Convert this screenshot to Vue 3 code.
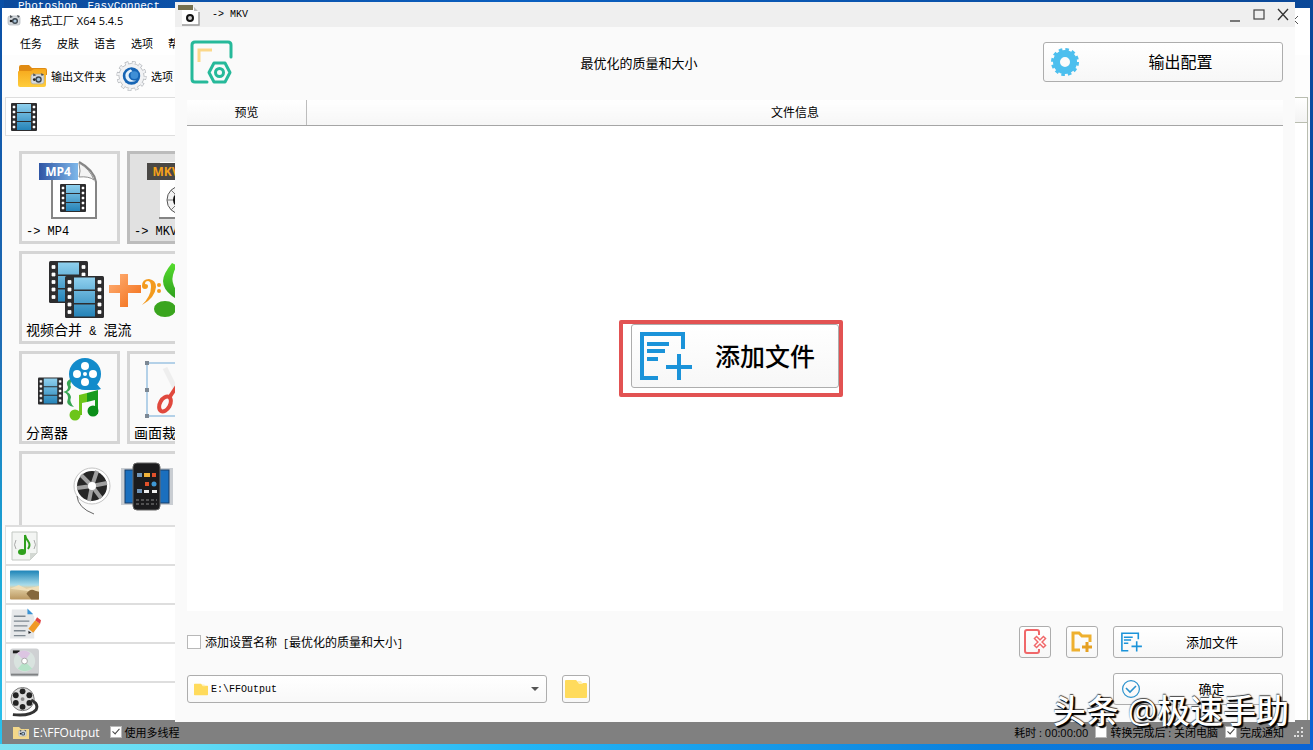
<template>
  <div class="desktop">
    <svg class="defs" width="0" height="0" aria-hidden="true">
      <defs>
        <linearGradient id="blue" x1="0" y1="0" x2="0" y2="1">
          <stop offset="0" stop-color="#8fd0ee" />
          <stop offset="1" stop-color="#2583b8" />
        </linearGradient>
        <linearGradient id="ribbon">
          <stop offset="0" stop-color="#2f55a4" />
          <stop offset="1" stop-color="#7fb8ea" />
        </linearGradient>
        <linearGradient id="orange" x1="0" y1="0" x2="1" y2="1">
          <stop offset="0" stop-color="#ffb27a" />
          <stop offset="1" stop-color="#f26b12" />
        </linearGradient>
        <linearGradient id="green" x1="0" y1="0" x2="0" y2="1">
          <stop offset="0" stop-color="#55dd2e" />
          <stop offset="1" stop-color="#2c9a1c" />
        </linearGradient>
        <linearGradient id="folder" x1="0" y1="0" x2="0" y2="1">
          <stop offset="0" stop-color="#f6a81c" />
          <stop offset="1" stop-color="#ffcd3c" />
        </linearGradient>
        <linearGradient id="sky" x1="0" y1="0" x2="0" y2="1">
          <stop offset="0" stop-color="#1d84b8" />
          <stop offset="0.5" stop-color="#a9dcea" />
          <stop offset="0.6" stop-color="#e2cfa4" />
          <stop offset="1" stop-color="#b9965f" />
        </linearGradient>
        <symbol id="film" viewBox="0 0 26 28">
          <rect width="26" height="28" rx="1" fill="#2d2d2f" />
          <path d="M6 1h14v8H6zM6 10h14v8H6zM6 19h14v8H6z" fill="url(#blue)" />
          <path d="M2 3h2v2H2zM2 8h2v2H2zM2 13h2v2H2zM2 18h2v2H2zM2 23h2v2H2z" fill="#fff" stroke="#fff" stroke-width="0.5" />
          <path d="M22 3h2v2h-2zM22 8h2v2h-2zM22 13h2v2h-2zM22 18h2v2h-2zM22 23h2v2h-2z" fill="#fff" stroke="#fff" stroke-width="0.5" />
        </symbol>
        <symbol id="camera" viewBox="0 0 14 12">
          <rect x="1" y="2" width="12" height="9" rx="2" fill="#d6dade" stroke="#a4abb1" stroke-width="0.6" />
          <path d="M3 1l3 2-3 1zM10 1l3 1-2 2z" fill="#4d5358" />
          <circle cx="8" cy="7" r="3" fill="#3d4750" />
          <circle cx="8" cy="7" r="1.6" fill="#a8c4da" />
          <circle cx="4" cy="7" r="1.3" fill="#222" />
        </symbol>
        <symbol id="addfile" viewBox="0 0 52 50">
          <path d="M43 18V3H2v44h16" fill="none" stroke="#1b93d9" stroke-width="4" />
          <path d="M7 13h22M7 20h18M7 28h11M39 23v26M26 36h26" fill="none" stroke="#1b93d9" stroke-width="4" />
        </symbol>
        <symbol id="plainfolder" viewBox="0 0 22 20">
          <path d="M0 2q0-1 1-1h10l3 3h7q1 0 1 1v13q0 1-1 1H1q-1 0-1-1z" fill="#ffdb5c" />
          <path d="M12 2h4l2 3h-4z" fill="#fff0b4" />
        </symbol>
      </defs>
    </svg>

    <div class="desktop-labels"><span>Photoshop</span><span>EasyConnect</span></div>

    <section class="main-window">
      <header class="main-title">
        <svg class="app-icon" viewBox="0 0 14 12"><use href="#camera" /></svg>
        <span>格式工厂 X64 5.4.5</span>
        <button class="main-close" type="button" aria-label="关闭">
          <svg width="8" height="8" viewBox="0 0 8 8"><path d="M0 0l8 8M8 0L0 8" stroke="#555" /></svg>
        </button>
      </header>
      <nav class="menu">
        <button v-for="item in menus" :key="item" type="button">{{ item }}</button>
      </nav>
      <div class="toolbar">
        <button type="button">
          <svg width="29" height="24" viewBox="0 0 29 24">
            <path d="M1 3q0-2 2-2h8l3 3h13q2 0 2 2v5H1z" fill="#e08b13" />
            <path d="M0 8q0-1 1-1h12l3-2h11q1 0 1 1v15q0 2-2 2H2q-2 0-2-2z" fill="url(#folder)" />
            <use href="#camera" x="12" y="8" width="15" height="13" />
          </svg>
          <span>输出文件夹</span>
        </button>
        <button type="button">
          <svg width="31" height="32" viewBox="0 0 32 32">
            <circle cx="16" cy="16" r="13.5" fill="none" stroke="#a9adb2" stroke-width="4" stroke-dasharray="3.6 3.47" />
            <circle cx="16" cy="16" r="13" fill="#f1f2f4" stroke="#b0b4b8" stroke-width="0.8" />
            <circle cx="16" cy="16" r="13.5" fill="none" stroke="#f1f2f4" stroke-width="3" stroke-dasharray="2.6 4.47" stroke-dashoffset="-0.5" />
            <circle cx="16" cy="16" r="9" fill="#1765b4" />
            <path d="M15 9q-7 3-5 9 3 6 11 3-7 0-8-5 0-4 4-5z" fill="#e3f1fc" />
            <circle cx="19" cy="15" r="4" fill="#3f8fd6" />
          </svg>
          <span>选项</span>
        </button>
      </div>

      <div class="main-body">
        <aside class="side">
          <button class="category first" type="button" aria-label="视频">
            <svg width="26" height="28"><use href="#film" width="26" height="28" /></svg>
          </button>

          <div class="tiles">
            <button class="tile" type="button">
              <svg width="62" height="62" viewBox="0 0 62 62">
                <path d="M13 4h28l16 16v41H13z" fill="#fff" />
                <path d="M13 22V4" stroke="#c8c8c8" />
                <path d="M13 22v38M12 60h45V24q-2-12-17-20" fill="none" stroke="#858585" stroke-width="2" />
                <path d="M40 5q2 9 0 14 10-1 15 3-4-11-15-17z" fill="#f4f4f4" stroke="#8d8d8d" />
                <rect x="0" y="5" width="39" height="17" fill="url(#ribbon)" />
                <text x="19" y="18" class="ribbon-text" fill="#fff">MP4</text>
                <use href="#film" x="21" y="26" width="26" height="28" />
              </svg>
              <span class="tile-label latin">-&gt; MP4</span>
            </button>
            <button class="tile active" type="button">
              <svg width="62" height="62" viewBox="0 0 62 62">
                <path d="M13 4h28l16 16v41H13z" fill="#fff" />
                <path d="M12 60h45V24q-2-12-17-20" fill="none" stroke="#858585" stroke-width="2" />
                <rect x="0" y="5" width="39" height="17" fill="#4a4845" />
                <text x="19" y="18" class="ribbon-text" fill="#f6a21a">MKV</text>
                <circle cx="34" cy="42" r="14" fill="#f2f2f2" stroke="#555" />
                <path d="M20 42h28M24 32l20 20M24 52l20-20" stroke="#777" />
                <circle cx="34" cy="42" r="8" fill="#111" />
              </svg>
              <span class="tile-label latin">-&gt; MKV</span>
            </button>
            <button class="tile wide" type="button">
              <svg width="150" height="62" viewBox="0 0 150 62">
                <use href="#film" x="0" y="3" width="39" height="42" />
                <use href="#film" x="16" y="18" width="39" height="42" />
                <path d="M71 16h8v11h13v8H79v14h-8V35H60v-8h11z" fill="url(#orange)" />
                <path d="M93 28q0-7 7-7 7 1 7 8-1 11-14 18 9-9 9-18 0-6-3-6-3 0-3 3 3 0 3 2 0 3-3 3-3 0-3-3z" fill="#f39a1d" />
                <circle cx="110" cy="27" r="2" fill="#f39a1d" /><circle cx="110" cy="33" r="2" fill="#f39a1d" />
                <path d="M123 5q-9 11-9 18 0 8 9 15l9 6-5-12q-5-8-3-15 2-8 5-9z" fill="url(#green)" />
                <ellipse cx="116" cy="51" rx="11" ry="8" fill="#3aa51e" />
              </svg>
              <span class="tile-label">视频合并<span class="latin">&nbsp;&amp;&nbsp;</span>混流</span>
            </button>
            <button class="tile" type="button">
              <svg width="66" height="66" viewBox="0 0 66 66">
                <use href="#film" x="1" y="19" width="25" height="28" />
                <path d="M37 20q-10 2-6 9 0 4-5 5 5 1 5 6-3 8 6 9-5-5-3-10-1-4-4-5 3-1 4-5-2-5 3-9z" fill="#36a653" />
                <circle cx="48" cy="16" r="16" fill="#138bcb" />
                <path d="M48 32h10q4 0 6-1l-5-6z" fill="#138bcb" />
                <g fill="#fff">
                  <circle cx="48" cy="8" r="4" /><circle cx="48" cy="24" r="4" />
                  <circle cx="40" cy="16" r="4" /><circle cx="56" cy="16" r="4" /><circle cx="48" cy="16" r="2" />
                </g>
                <path d="M50 35l11-3v24h-3V42l-8 2z" fill="#179b1d" />
                <path d="M42 37l8-2v9l-5 1v12h-3z" fill="#6cc51a" />
                <circle cx="38" cy="57" r="5.5" fill="#6cc51a" /><circle cx="56" cy="53" r="5.5" fill="#0b8e19" />
              </svg>
              <span class="tile-label">分离器</span>
            </button>
            <button class="tile" type="button">
              <svg width="66" height="66" viewBox="0 0 66 66">
                <rect x="2" y="5" width="60" height="53" fill="none" stroke="#6fa8d6" />
                <path d="M0 3h4v4H0zM0 30h4v4H0zM0 56h4v4H0z" fill="#7c8894" />
                <path d="M20 10l14 28" stroke="#eee" stroke-width="5" />
                <ellipse cx="20" cy="46" rx="5" ry="8" transform="rotate(30 20 46)" fill="none" stroke="#e0493e" stroke-width="4" />
                <path d="M24 40l8-12" stroke="#e0493e" stroke-width="4" />
              </svg>
              <span class="tile-label">画面裁剪</span>
            </button>
            <button class="tile wide" type="button" aria-label="设备">
              <svg width="102" height="66" viewBox="0 0 102 66">
                <circle cx="19" cy="28" r="18" fill="#fff" stroke="#c4c4c4" />
                <circle cx="19" cy="28" r="15" fill="#262626" />
                <path d="M19 28L8 17M19 28l15-3M19 28l-3 15M19 28l5-15M19 28l9 12M19 28L4 30" stroke="#a0a0a0" stroke-width="4" />
                <circle cx="19" cy="28" r="4" fill="#fff" />
                <path d="M4 38q1 12 17 18" fill="none" stroke="#666" />
                <rect x="48" y="10" width="52" height="37" fill="#c9cdd2" />
                <rect x="52" y="12" width="44" height="33" fill="#1a6fbe" stroke="#173d66" />
                <rect x="60" y="5" width="27" height="47" rx="4" fill="#1b1b1d" stroke="#666" />
                <path d="M64 15h5v4h-5zM64 31h5v4h-5z" fill="#7295b8" />
                <path d="M71 15h6v4h-6z" fill="#f1b23a" /><path d="M79 15h4v4h-4zM72 24h4v4h-4z" fill="#e1512b" />
                <circle cx="81" cy="26" r="2.5" fill="#3f98d5" /><path d="M71 32h5v3h-5zM79 32h5v3h-5z" fill="#eee" />
                <path d="M63 42h21M63 46h21" stroke="#888" stroke-dasharray="3 2" />
              </svg>
            </button>
          </div>

          <button class="category" type="button" aria-label="音频">
            <svg width="28" height="30" viewBox="0 0 28 30">
              <path d="M2 1h25v21l-7 7H2z" fill="#f3f5f3" stroke="#c3c8c3" />
              <path d="M27 22h-7v7z" fill="#d3d8d3" />
              <path d="M15 4v17M15 4q1 4 3 6 3 4 0 8" fill="none" stroke="#2fa01d" stroke-width="2" />
              <ellipse cx="12" cy="21" rx="4" ry="3" fill="#2fa01d" />
              <path d="M6 9q-3 5 0 9M24 9q3 5 0 9" fill="none" stroke="#aaa" />
            </svg>
          </button>
          <button class="category" type="button" aria-label="图片">
            <svg width="29" height="30" viewBox="0 0 30 30">
              <rect width="30" height="30" rx="1" fill="url(#sky)" />
              <path d="M0 19l9-4 8 4 13-3v9l-13-4z" fill="#f0dfb9" />
              <path d="M17 24q4-6 9-3l4 1v8h-8z" fill="#85683d" />
            </svg>
          </button>
          <button class="category" type="button" aria-label="文档">
            <svg width="31" height="32" viewBox="0 0 32 32">
              <path d="M2 1h16l7 7v23H0z" fill="#e6e8ea" />
              <path d="M18 0l6 6h-6z" fill="#3c94d4" />
              <path d="M4 8h12M4 13h16M4 18h14M4 23h12M4 28h12" stroke="#7d8790" stroke-width="1.4" />
              <path d="M26 12l5 4-7 9-5-4z" fill="#f09a26" />
              <path d="M26 12l2-3 4 3-1 4z" fill="#e04545" />
              <path d="M19 23l3 2-3 1z" fill="#222" />
            </svg>
          </button>
          <button class="category" type="button" aria-label="光驱设备">
            <svg width="29" height="30" viewBox="0 0 30 30">
              <rect width="30" height="29" rx="3" fill="#cfd1d3" />
              <path d="M1 26h28v2H1z" fill="#7f8183" /><path d="M3 2h7v3H3z" fill="#1d1d1d" />
              <circle cx="15" cy="13" r="11" fill="#d9e3df" />
              <path d="M15 13L7 5q8-6 14 0z" fill="#dcc5e2" /><path d="M15 13l8 8q-8 5-15 0z" fill="#b6e2c8" />
              <circle cx="15" cy="13" r="3" fill="#fff" stroke="#aaa" />
            </svg>
          </button>
          <button class="category" type="button" aria-label="工具集">
            <svg width="29" height="32" viewBox="0 0 30 32">
              <circle cx="13" cy="13" r="12" fill="#ddd" stroke="#777" />
              <g fill="#222">
                <circle cx="13" cy="5" r="3" /><circle cx="20" cy="9" r="3" /><circle cx="20" cy="17" r="3" />
                <circle cx="13" cy="21" r="3" /><circle cx="6" cy="17" r="3" /><circle cx="6" cy="9" r="3" />
              </g>
              <circle cx="13" cy="13" r="2" fill="#888" />
              <path d="M22 14q8 4 5 10-6 7-24 5" fill="none" stroke="#333" stroke-width="3" />
            </svg>
          </button>
        </aside>
        <div class="task-list">
          <div class="task-head"></div>
        </div>
      </div>

      <footer class="status">
        <svg width="16" height="14" viewBox="0 0 16 14">
          <path d="M0 2h6l2 2h8v10H0z" fill="#f3d78a" />
          <use href="#camera" x="5" y="4" width="9" height="8" />
        </svg>
        <span class="status-path">E:\FFOutput</span>
        <label><input v-model="multiThread" type="checkbox" />使用多线程</label>
        <div class="status-right">
          <span>耗时 : 00:00:00</span>
          <label><input v-model="shutdown" type="checkbox" />转换完成后 : 关闭电脑</label>
          <label><input v-model="notify" type="checkbox" />完成通知</label>
          <svg class="grip" width="10" height="10" viewBox="0 0 10 10">
            <path d="M7 0h2v2H7zM3 4h2v2H3zM7 4h2v2H7zM0 8h2v2H0zM3 8h2v2H3zM7 8h2v2H7z" fill="#ddd" />
          </svg>
        </div>
      </footer>
    </section>

    <section class="dialog">
      <header class="dialog-title">
        <svg width="24" height="22" viewBox="0 0 24 22">
          <path d="M5 4h13l4 4v13H5z" fill="#fff" />
          <path d="M5 21h17V8" fill="none" stroke="#999" stroke-width="1.4" />
          <path d="M17 3l4 4h-4z" fill="#bbb" />
          <rect x="1" y="1" width="15" height="5" fill="#75704f" />
          <circle cx="13" cy="14" r="3" fill="#ccc" stroke="#111" stroke-width="2" />
        </svg>
        <span class="latin-small">-&gt; MKV</span>
        <div class="window-buttons">
          <button type="button" aria-label="最小化">
            <svg width="12" height="14" viewBox="0 0 12 14"><path d="M1 13h10" stroke="#444" stroke-width="1.4" /></svg>
          </button>
          <button type="button" aria-label="最大化">
            <svg width="12" height="14" viewBox="0 0 12 14"><rect x="1" y="2" width="10" height="9" fill="none" stroke="#444" stroke-width="1.2" /></svg>
          </button>
          <button type="button" aria-label="关闭">
            <svg width="12" height="14" viewBox="0 0 12 14"><path d="M1 1l10 11M11 1L1 12" stroke="#333" stroke-width="1.3" /></svg>
          </button>
        </div>
      </header>

      <div class="dialog-body">
        <div class="preset">
          <svg width="48" height="44" viewBox="0 0 48 44">
            <path d="M20 42H8q-3 0-3-3V5q0-3 3-3h33q3 0 3 3v12" fill="none" stroke="#26b99a" stroke-width="3" stroke-linecap="round" />
            <path d="M12 22V10h13" fill="none" stroke="#fbd88a" stroke-width="3" />
            <path d="M27 23h11l5 9.500-5 9.500H27l-5-9.500z" fill="none" stroke="#26b99a" stroke-width="3" stroke-linejoin="round" />
            <circle cx="32.500" cy="32.500" r="4" fill="none" stroke="#26b99a" stroke-width="3" />
          </svg>
          <span class="preset-name">最优化的质量和大小</span>
          <button class="btn btn-config" type="button">
            <svg width="28" height="28" viewBox="0 0 28 28">
              <circle cx="14" cy="14" r="8.500" fill="none" stroke="#4dbfee" stroke-width="7" />
              <circle cx="14" cy="14" r="12" fill="none" stroke="#4dbfee" stroke-width="4" stroke-dasharray="3.4 2.88" />
            </svg>
            <span>输出配置</span>
          </button>
        </div>

        <table class="file-head">
          <thead>
            <tr><th class="col-preview">预览</th><th>文件信息</th></tr>
          </thead>
        </table>
        <div class="file-area">
          <div class="add-wrap">
            <button class="btn btn-add-large" type="button">
              <svg width="52" height="50"><use href="#addfile" width="52" height="50" /></svg>
              <span>添加文件</span>
            </button>
            <div class="highlight"></div>
          </div>
        </div>

        <div class="options">
          <label class="name-option">
            <input v-model="addName" type="checkbox" />
            <span>添加设置名称<span class="latin-small">&nbsp;[</span>最优化的质量和大小<span class="latin-small">]</span></span>
          </label>
          <button class="btn btn-icon push" type="button" aria-label="移除">
            <svg width="24" height="26" viewBox="0 0 24 26">
              <path d="M16 6V3q0-2-2-2H4Q2 1 2 3v19q0 2 2 2h10q2 0 2-2v-2" fill="none" stroke="#f0686a" stroke-width="2" />
              <path d="M12 8l10 10M22 8L12 18" stroke="#f0686a" stroke-width="4.500" />
              <path d="M13 9l8 8M21 9l-8 8" stroke="#fff" stroke-width="1.6" />
            </svg>
          </button>
          <button class="btn btn-icon" type="button" aria-label="添加文件夹">
            <svg width="22" height="22" viewBox="0 0 22 22">
              <path d="M9 19H2V2h6l3 3h8v6" fill="none" stroke="#eeb02f" stroke-width="3" />
              <path d="M16 11v10M11 16h10" stroke="#e5a022" stroke-width="3" />
            </svg>
          </button>
          <button class="btn btn-action" type="button">
            <svg width="21" height="20"><use href="#addfile" width="21" height="20" /></svg>
            <span>添加文件</span>
          </button>
        </div>

        <div class="options">
          <div class="output">
            <svg class="output-icon" width="14" height="13"><use href="#plainfolder" width="14" height="13" /></svg>
            <select v-model="outputDir" aria-label="输出文件夹">
              <option>E:\FFOutput</option>
            </select>
            <svg class="output-arrow" width="8" height="5" viewBox="0 0 8 5"><path d="M0 0h8L4 4z" fill="#555" /></svg>
          </div>
          <button class="btn btn-browse" type="button" aria-label="浏览">
            <svg width="22" height="20"><use href="#plainfolder" width="22" height="20" /></svg>
          </button>
          <button class="btn btn-action push" type="button">
            <svg width="20" height="20" viewBox="0 0 20 20">
              <circle cx="10" cy="10" r="8.400" fill="none" stroke="#2b92cd" stroke-width="1.2" />
              <path d="M5 9l4 4 6-6" fill="none" stroke="#2b92cd" stroke-width="1.6" />
            </svg>
            <span>确定</span>
          </button>
        </div>
      </div>
    </section>

    <div class="watermark">头条 @极速手助</div>
  </div>
</template>

<script setup>
import { ref } from 'vue'

const menus = ['任务', '皮肤', '语言', '选项', '帮助']

const multiThread = ref(true)
const shutdown = ref(false)
const notify = ref(true)
const addName = ref(false)
const outputDir = ref('E:\\FFOutput')
</script>

<style>
body {
  margin: 0;
}
</style>

<style scoped>
.desktop {
  position: relative;
  height: 100vh;
  min-height: 640px;
  overflow: hidden;
  background: linear-gradient(to right, #7fe3f2 0, #62dcf5 14%, #23b5f5 40%, #0b7fdc 75%, #0a63d4 100%) bottom / 100% 6px no-repeat,
    linear-gradient(to bottom, #0a4fa6 0, #1f6cb4 45%, #19a8d8 75%, #2cc3ee 100%) left / 4px 100% no-repeat,
    linear-gradient(to bottom, transparent, #0a63d4) right / 4px 100% no-repeat,
    linear-gradient(to right, #0c4a9c, #0a5fc0 40%, #0a4797);
  color: #000;
  font-family: 'Open Sans', 'Noto Sans CJK SC', sans-serif;
  font-size: 11px;
}

.defs {
  position: absolute;
}

button {
  margin: 0;
  padding: 0;
  border: none;
  background: none;
  color: inherit;
  font: inherit;
}

svg {
  display: block;
  flex: none;
}

label {
  display: flex;
  align-items: center;
}

input[type='checkbox'] {
  flex: none;
  width: 12px;
  height: 12px;
  margin: 0;
  appearance: none;
  border: 1px solid #b8b8b8;
  background: #fff;
}

input[type='checkbox']:checked::after {
  content: '';
  display: block;
  width: 3px;
  height: 6px;
  margin: 0 0 0 3px;
  border: solid #444;
  border-width: 0 1px 1px 0;
  transform: rotate(42deg);
}

.latin {
  font-family: 'Liberation Mono', monospace;
  font-size: 12px;
}

.latin-small {
  font-family: 'Liberation Mono', monospace;
  font-size: 10px;
}

.desktop-labels {
  display: flex;
  gap: 10px;
  padding-left: 18px;
  color: #fff;
  font-family: 'Liberation Mono', monospace;
  font-size: 11px;
  line-height: 12px;
}

/* main window */
.main-window {
  position: absolute;
  inset: 8px 3px 6px 2px;
  display: flex;
  flex-direction: column;
  background: #fafafa;
}

.main-title {
  display: flex;
  align-items: center;
  gap: 9px;
  height: 23px;
  padding: 0 12px 0 5px;
  background: #fff;
}

.main-close {
  margin-left: auto;
}

.app-icon {
  width: 14px;
  height: 12px;
}

.menu {
  display: flex;
  align-items: center;
  gap: 15px;
  height: 24px;
  padding-left: 18px;
  background: #fff;
}

.toolbar {
  display: flex;
  align-items: center;
  gap: 10px;
  height: 42px;
  padding-left: 16px;
  background: #fdfdfd;
}

.toolbar button {
  display: flex;
  align-items: center;
  gap: 4px;
}

.main-body {
  display: flex;
  flex: 1;
  min-height: 0;
}

.side {
  display: flex;
  flex: none;
  flex-direction: column;
  width: 243px;
}

.task-list {
  flex: 1;
  margin-right: 2px;
  border: solid #b9bdb0;
  border-width: 1px 1px 0;
  background: #fff;
}

.task-head {
  height: 24px;
  border-bottom: 1px solid #b9bdb0;
  background: linear-gradient(#fff, #f3f3f3);
}

.category {
  display: flex;
  align-items: center;
  flex: none;
  height: 39px;
  margin: 0 3px;
  padding-left: 4px;
  border: 1px solid #dedede;
  border-top-width: 2px;
  border-bottom: none;
  background: #fff;
}

.category.first {
  padding-left: 5px;
  border-width: 1px;
  border-bottom: 1px solid #dedede;
}

.tiles {
  display: grid;
  flex: 1;
  grid-template-columns: 101px 101px;
  grid-auto-rows: 93px;
  gap: 7px;
  min-height: 0;
  padding: 15px 17px 0;
  overflow: hidden;
}

.tile {
  display: flex;
  flex-direction: column;
  align-items: center;
  justify-content: space-between;
  padding: 4px 4px 0;
  border: 3px solid #d5d5d5;
  background: #fafafa;
}

.tile.active {
  border-color: #bcbcbc;
  background: #e1e1e1;
}

.tile.wide {
  grid-column: span 2;
}

.tile-label {
  align-self: flex-start;
  margin-top: -2px;
  font-family: 'Noto Sans CJK SC', sans-serif;
  font-size: 14px;
  line-height: 18px;
  white-space: nowrap;
}

.tile-label.latin {
  font-family: 'Liberation Mono', monospace;
  font-size: 12px;
}

.ribbon-text {
  font-size: 12px;
  font-weight: 700;
  text-anchor: middle;
}

.status {
  display: flex;
  align-items: center;
  flex: none;
  height: 24px;
  padding: 0 6px 0 11px;
  background: #808080;
}

.status label {
  gap: 3px;
}

.status-path {
  margin: 0 10px 0 4px;
  color: #fff;
  font-size: 12px;
}

.status-right {
  display: flex;
  align-items: center;
  gap: 7px;
  margin-left: auto;
}

.grip {
  margin-left: 3px;
}

/* conversion dialog */
.dialog {
  position: absolute;
  inset: 2px 18px 28px 175px;
  display: flex;
  flex-direction: column;
  background: #fafafa;
}

.dialog-title {
  display: flex;
  align-items: center;
  gap: 11px;
  flex: none;
  height: 25px;
  padding: 0 6px 0 2px;
  background: #efefef;
}

.window-buttons {
  display: flex;
  gap: 12px;
  margin-left: auto;
}

.dialog-body {
  display: flex;
  flex: 1;
  flex-direction: column;
  padding: 13px 12px 17px;
}

.preset {
  display: flex;
  align-items: center;
  height: 44px;
  margin-bottom: 16px;
}

.preset-name {
  flex: 1;
  font-size: 13px;
  text-align: center;
}

.btn {
  display: flex;
  align-items: center;
  justify-content: center;
  box-sizing: border-box;
  border: 1px solid #adadad;
  border-radius: 3px;
  background: linear-gradient(#fff, #f7f7f7);
}

.btn span {
  flex: 1;
  padding-bottom: 2px;
  text-align: center;
}

.btn-config {
  width: 240px;
  height: 40px;
  padding-left: 7px;
  font-size: 16px;
}

.file-head {
  width: 100%;
  border-collapse: collapse;
  table-layout: fixed;
}

.file-head th {
  height: 25px;
  padding: 0;
  border-bottom: 1px solid #a5a5a5;
  background: linear-gradient(#fff, #f6f6f6);
  font-size: 12px;
  font-weight: 400;
  line-height: 18px;
}

.file-head .col-preview {
  width: 119px;
  border-right: 1px solid #bdbdbd;
}

.file-area {
  display: flex;
  align-items: center;
  justify-content: center;
  flex: 1;
  padding-bottom: 26px;
  background: #fff;
}

.add-wrap {
  position: relative;
}

.btn-add-large {
  width: 208px;
  height: 64px;
  padding-left: 8px;
  font-size: 25px;
  font-weight: 500;
}

.highlight {
  position: absolute;
  inset: -4px -4px -9px -12px;
  border: 4px solid #e25252;
  border-radius: 2px;
  pointer-events: none;
}

.options {
  display: flex;
  align-items: center;
  gap: 15px;
  height: 32px;
  margin-top: 15px;
}

.name-option {
  gap: 4px;
  font-size: 12px;
}

.name-option input[type='checkbox'] {
  width: 14px;
  height: 14px;
}

.push {
  margin-left: auto;
}

.btn-icon {
  width: 32px;
  height: 32px;
}

.btn-browse {
  width: 28px;
  height: 28px;
}

.btn-action {
  width: 170px;
  height: 32px;
  padding-left: 7px;
  font-size: 13px;
}

.output {
  position: relative;
  width: 360px;
}

.output select {
  display: block;
  width: 100%;
  height: 28px;
  padding: 0 24px 0 23px;
  appearance: none;
  border: 1px solid #adadad;
  border-radius: 3px;
  background: linear-gradient(#fff, #f8f8f8);
  color: #000;
  font-family: 'Liberation Mono', monospace;
  font-size: 10px;
}

.output-icon {
  position: absolute;
  top: 8px;
  left: 7px;
}

.output-arrow {
  position: absolute;
  top: 12px;
  right: 8px;
}

.watermark {
  position: absolute;
  right: 24px;
  bottom: 14px;
  color: #fff;
  font-size: 33px;
  font-weight: 500;
  line-height: 50px;
  text-shadow: 1px 1px 1px #000, 2px 2px 1px #000, 0 -1px 1px #444;
  pointer-events: none;
  white-space: nowrap;
}
</style>
